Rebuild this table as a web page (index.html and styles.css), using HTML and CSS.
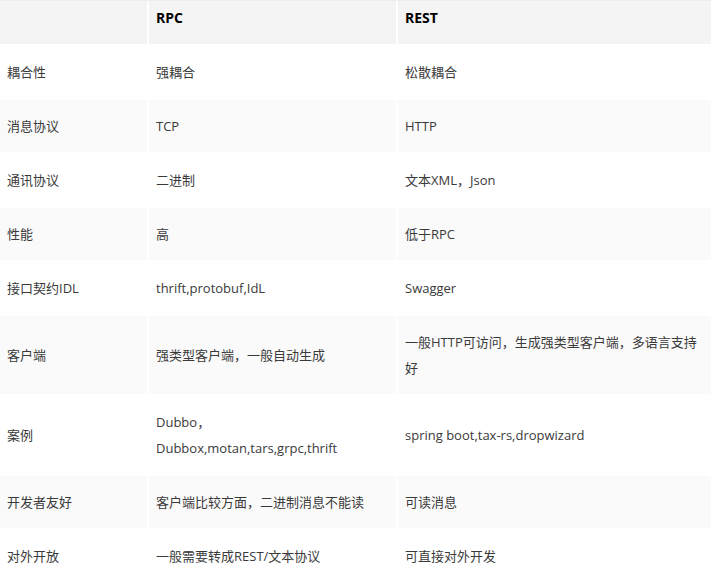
FILE: index.html
```html
<!DOCTYPE html>
<html lang="zh-CN">
<head>
<meta charset="utf-8">
<title>RPC vs REST</title>
<link rel="stylesheet" href="styles.css">
</head>
<body>
<div class="table">
  <div class="cell head"></div>
  <div class="cell head">RPC</div>
  <div class="cell head">REST</div>

  <div class="cell">耦合性</div>
  <div class="cell">强耦合</div>
  <div class="cell">松散耦合</div>

  <div class="cell alt">消息协议</div>
  <div class="cell alt">TCP</div>
  <div class="cell alt">HTTP</div>

  <div class="cell">通讯协议</div>
  <div class="cell">二进制</div>
  <div class="cell">文本XML，Json</div>

  <div class="cell alt">性能</div>
  <div class="cell alt">高</div>
  <div class="cell alt">低于RPC</div>

  <div class="cell">接口契约IDL</div>
  <div class="cell">thrift,protobuf,IdL</div>
  <div class="cell">Swagger</div>

  <div class="cell alt">客户端</div>
  <div class="cell alt">强类型客户端，一般自动生成</div>
  <div class="cell alt">一般HTTP可访问，生成强类型客户端，多语言支持好</div>

  <div class="cell">案例</div>
  <div class="cell">Dubbo，Dubbox,motan,tars,grpc,thrift</div>
  <div class="cell">spring boot,tax-rs,dropwizard</div>

  <div class="cell alt">开发者友好</div>
  <div class="cell alt">客户端比较方面，二进制消息不能读</div>
  <div class="cell alt">可读消息</div>

  <div class="cell">对外开放</div>
  <div class="cell">一般需要转成REST/文本协议</div>
  <div class="cell">可直接对外开发</div>
</div>
</body>
</html>
```

FILE: styles.css
```css
html, body {
  margin: 0;
  padding: 0;
  background: #ffffff;
}

body {
  font-family: "Open Sans", "Noto Sans CJK SC", sans-serif;
  font-size: 13px;
  color: #3a3a3a;
  border-top: 1px solid #eeeeee;
}

.table {
  display: grid;
  grid-template-columns: 147px 247px 313px;
  column-gap: 2px;
  row-gap: 2px;
  width: 711px;
}

.cell {
  display: flex;
  align-items: center;
  padding: 13px 7px;
  line-height: 26px;
  min-height: 26px;
  background: #ffffff;
}

.cell.alt {
  background: #fafafa;
}

.cell.head {
  background: #f4f4f4;
  font-size: 14px;
  font-weight: bold;
  color: #000000;
  padding: 4px 7px 13px;
  align-items: flex-start;
}
```
